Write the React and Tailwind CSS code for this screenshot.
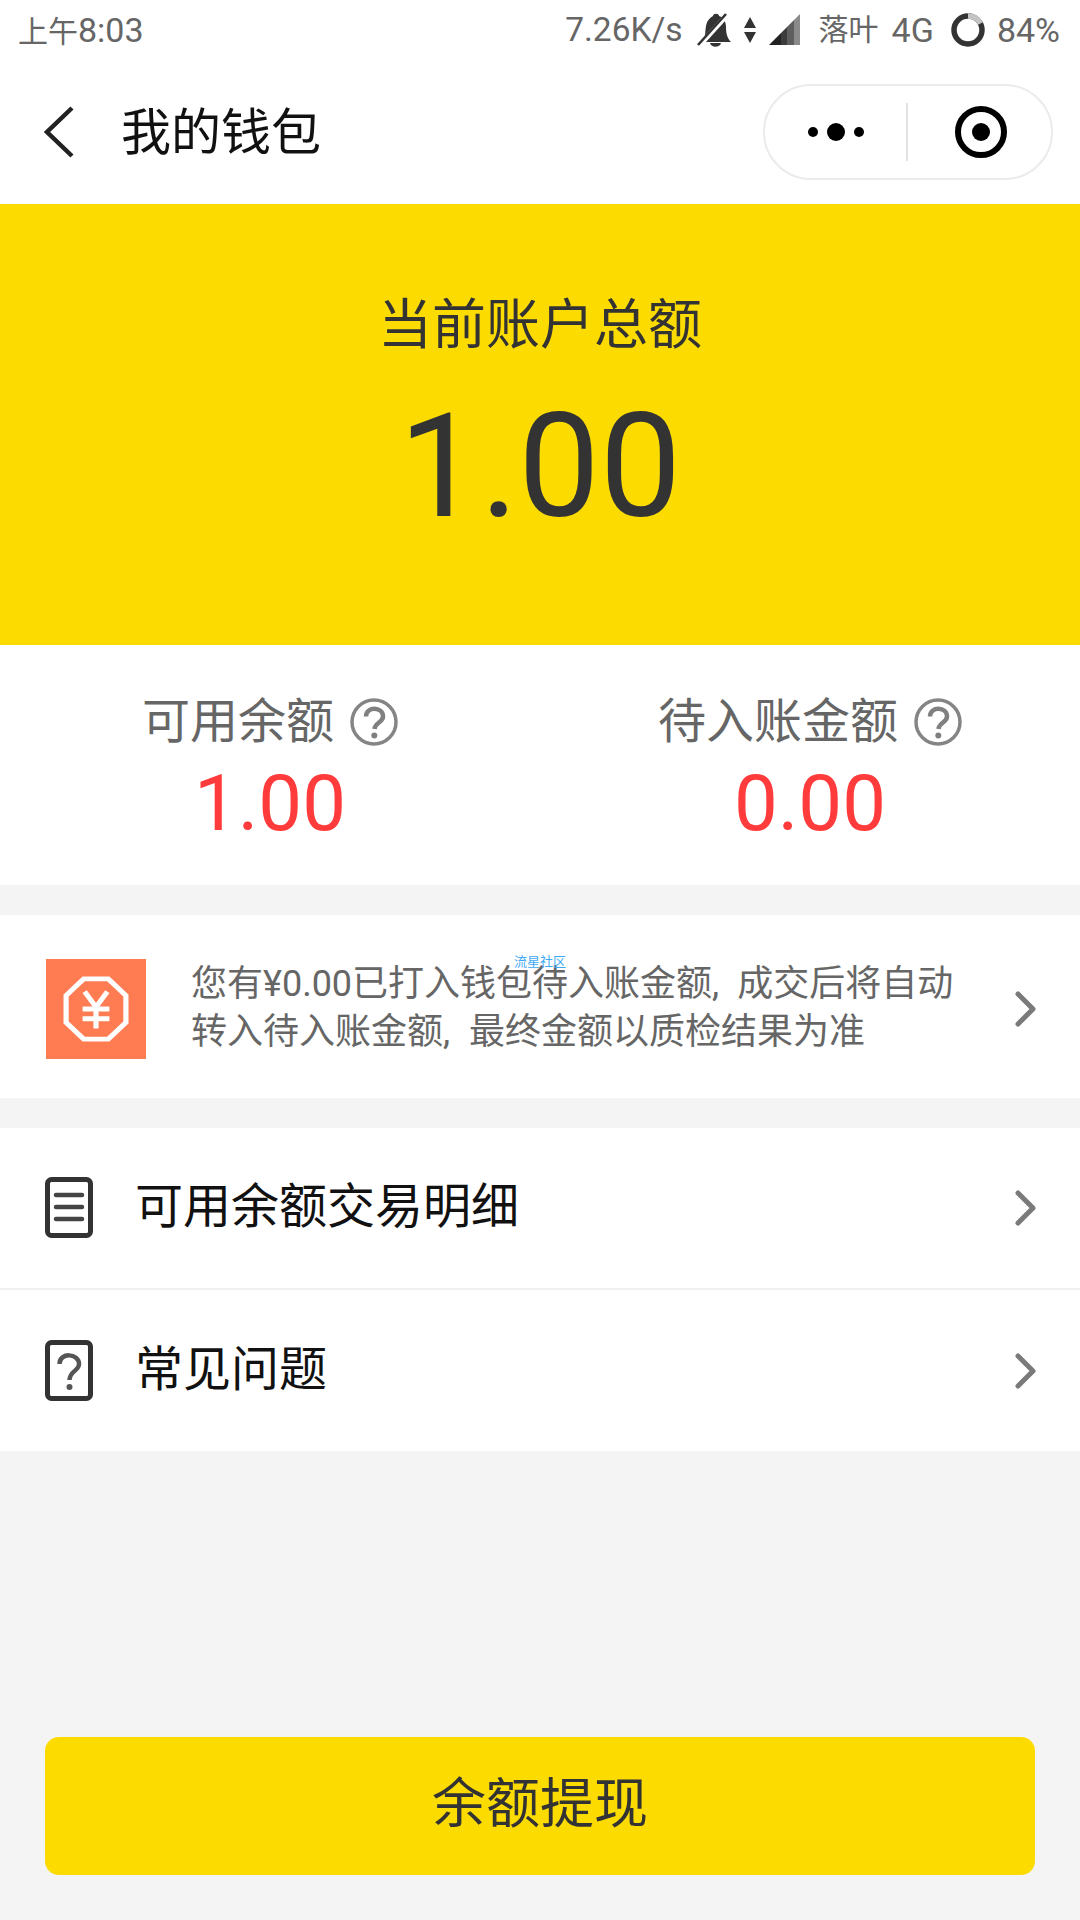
const CJK = "font-['Roboto','Noto_Sans_CJK_SC',sans-serif]"

const Chevron = () => (
  <svg width="24" height="40" viewBox="0 0 24 40" className="shrink-0">
    <path d="M4 5 L19 20 L4 35" fill="none" stroke="#7a7a7a" strokeWidth="5" strokeLinecap="round" strokeLinejoin="round" />
  </svg>
)

const HelpIcon = () => (
  <svg width="48" height="48" viewBox="0 0 48 48" className="shrink-0">
    <circle cx="24" cy="24" r="22" fill="none" stroke="#858585" strokeWidth="3.5" />
    <path d="M16 18.5 C16 8 33 8.5 33 18.5 C33 24.5 25 24.5 24.5 31" fill="none" stroke="#808080" strokeWidth="4.5" />
    <circle cx="24.3" cy="37.5" r="3" fill="#808080" />
  </svg>
)

const StatusBar = () => (
  <div className="flex h-[60px] items-center justify-between pl-[18px] pr-[20px] text-[34px] leading-none text-[#666]">
    <span>
      <span className="text-[30px]">上午</span>8:03
    </span>
    <div className="flex items-center">
      <span className="text-[33.5px]">7.26K/s</span>
      <svg width="36" height="34" viewBox="0 0 36 34" className="ml-[14px]">
        <path d="M5 29 C9 24 8 18 9 13 C10 7 14 4 16 3 C16 0 22 0 22 3 C27 5 29 9 29 14 C29 20 30 25 34 29 Z" fill="#333" />
        <path d="M13 30 C14 35 23 35 24 30 Z" fill="#333" />
        <path d="M2 33 L31 1" stroke="#fff" strokeWidth="5" />
        <path d="M1 32 L29 1" stroke="#333" strokeWidth="2.6" />
      </svg>
      <svg width="14" height="28" viewBox="0 0 14 28" className="ml-[10px]">
        <path d="M7 1 L13 12 H1 Z M1 16 H13 L7 27 Z" fill="#333" />
      </svg>
      <svg width="32" height="32" viewBox="0 0 32 32" className="ml-[12px]">
        <path d="M0 31 L12 19 V31 Z" fill="#222" />
        <path d="M12 19 L18 13 V31 H12 Z" fill="#3c3c3c" />
        <path d="M18 13 L25 6 V31 H18 Z" fill="#5e5e5e" />
        <path d="M25 6 L31 0 V31 H25 Z" fill="#8a8a8a" />
      </svg>
      <span className="ml-[18px] text-[30px]">落叶</span>
      <span className="ml-[13px]">4G</span>
      <svg width="34" height="34" viewBox="0 0 34 34" className="ml-[17px]">
        <circle cx="17" cy="17" r="14" fill="none" stroke="#333" strokeWidth="5.5" />
        <path d="M17 3 A14 14 0 0 1 29.5 10.5" fill="none" stroke="#c4c4c4" strokeWidth="5.5" />
      </svg>
      <span className="ml-[12px]">84%</span>
    </div>
  </div>
)

const NavBar = () => (
  <div className="flex h-[144px] items-center justify-between pl-[43px] pr-[27px]">
    <div className="flex items-center">
      <svg width="32" height="54" viewBox="0 0 32 54">
        <path d="M29 3 L4 27 L29 51" fill="none" stroke="#222" strokeWidth="4.5" />
      </svg>
      <span className="ml-[46px] pt-[2px] text-[50px] leading-none text-[#111]">我的钱包</span>
    </div>
    <div className="flex h-[96px] w-[290px] items-center rounded-full border-2 border-[#ebebeb]">
      <div className="flex flex-1 items-center justify-center gap-[9px]">
        <span className="h-[10px] w-[10px] rounded-full bg-black" />
        <span className="h-[18px] w-[18px] rounded-full bg-black" />
        <span className="h-[10px] w-[10px] rounded-full bg-black" />
      </div>
      <div className="h-[58px] w-[2px] bg-[#e2e2e2]" />
      <div className="flex flex-1 items-center justify-center pl-[2px]">
        <div className="flex h-[52px] w-[52px] items-center justify-center rounded-full border-[6px] border-black">
          <span className="h-[18px] w-[18px] rounded-full bg-black" />
        </div>
      </div>
    </div>
  </div>
)

const Stat = ({ label, value }) => (
  <div className="flex flex-1 flex-col items-center">
    <div className="flex items-center">
      <span className="text-[48px] leading-[62px] text-[#666]">{label}</span>
      <span className="ml-[16px]"><HelpIcon /></span>
    </div>
    <span className="mt-[4px] text-[78px] leading-[94px] text-[#ff3b3b]">{value}</span>
  </div>
)

const ListRow = ({ icon, label, height }) => (
  <div className={`flex items-center pl-[45px] pr-[42px] ${height}`}>
    {icon}
    <span className="ml-[40px] flex-1 pb-[2px] text-[48px] leading-none text-[#111]">{label}</span>
    <Chevron />
  </div>
)

export default function App() {
  return (
    <div className={`flex h-[1920px] w-[1080px] flex-col bg-[#f4f4f4] ${CJK}`}>
      <div className="bg-white">
        <StatusBar />
        <NavBar />
      </div>

      {/* balance */}
      <div className="flex h-[441px] flex-col items-center bg-[#fcdb00] pt-[92px]">
        <span className="text-[54px] leading-[60px] text-[#333]">当前账户总额</span>
        <span className="mt-[25px] text-[145px] leading-[170px] text-[#333]">1.00</span>
      </div>

      <div className="flex h-[240px] bg-white pt-[46px]">
        <Stat label="可用余额" value="1.00" />
        <Stat label="待入账金额" value="0.00" />
      </div>

      {/* notice */}
      <div className="relative mt-[30px] flex h-[183px] items-center bg-white pl-[46px] pr-[42px]">
        <div className="mt-[4px] flex h-[100px] w-[100px] shrink-0 items-center justify-center bg-[#ff7b52]">
          <svg width="66" height="66" viewBox="0 0 64 68" preserveAspectRatio="none">
            <path d="M20 3 H44 L61 20 V48 L44 65 H20 L3 48 V20 Z" fill="none" stroke="#fff" strokeWidth="5" />
            <path d="M21 16 L32 32 L43 16 M32 32 V54 M19 34 H45 M19 44 H45" fill="none" stroke="#fff" strokeWidth="5" />
          </svg>
        </div>
        <p className="ml-[45px] flex-1 pt-[2px] text-[36px] leading-[48px] whitespace-nowrap text-[#666]">
          您有¥0.00已打入钱包待入账金额<span className="mr-[18px]">,</span>成交后将自动
          <br />
          转入待入账金额<span className="mr-[19px]">,</span>最终金额以质检结果为准
        </p>
        <span className="mt-[4px]"><Chevron /></span>
        <span className="absolute left-[514px] top-[40px] text-[13px] leading-none text-[#3fa9f5]">流星社区</span>
      </div>

      {/* list */}
      <div className="mt-[30px] bg-white">
        <ListRow
          label="可用余额交易明细"
          height="h-[160px]"
          icon={
            <svg width="50" height="62" viewBox="0 0 50 62" className="shrink-0">
              <rect x="2.5" y="2.5" width="43" height="56" rx="4" fill="none" stroke="#333" strokeWidth="5" />
              <path d="M11 18 H37 M11 30 H37 M11 42 H37" stroke="#444" strokeWidth="4.5" strokeLinecap="round" />
            </svg>
          }
        />
        <div className="h-[2px] bg-[#f0f0f0]" />
        <ListRow
          label="常见问题"
          height="h-[161px]"
          icon={
            <svg width="50" height="62" viewBox="0 0 50 62" className="shrink-0">
              <rect x="2.5" y="2.5" width="43" height="56" rx="4" fill="none" stroke="#333" strokeWidth="5" />
              <path d="M14.5 24 C14.5 12 34 13 34 24 C34 31 24.5 31 24.5 40" fill="none" stroke="#555" strokeWidth="4.5" />
              <circle cx="24.5" cy="47" r="3" fill="#555" />
            </svg>
          }
        />
      </div>

      <div className="mt-auto mb-[45px] px-[45px]">
        <div className="flex h-[138px] items-center justify-center rounded-[14px] bg-[#fcdb00] pb-[4px] text-[54px] text-[#333]">余额提现</div>
      </div>
    </div>
  )
}
